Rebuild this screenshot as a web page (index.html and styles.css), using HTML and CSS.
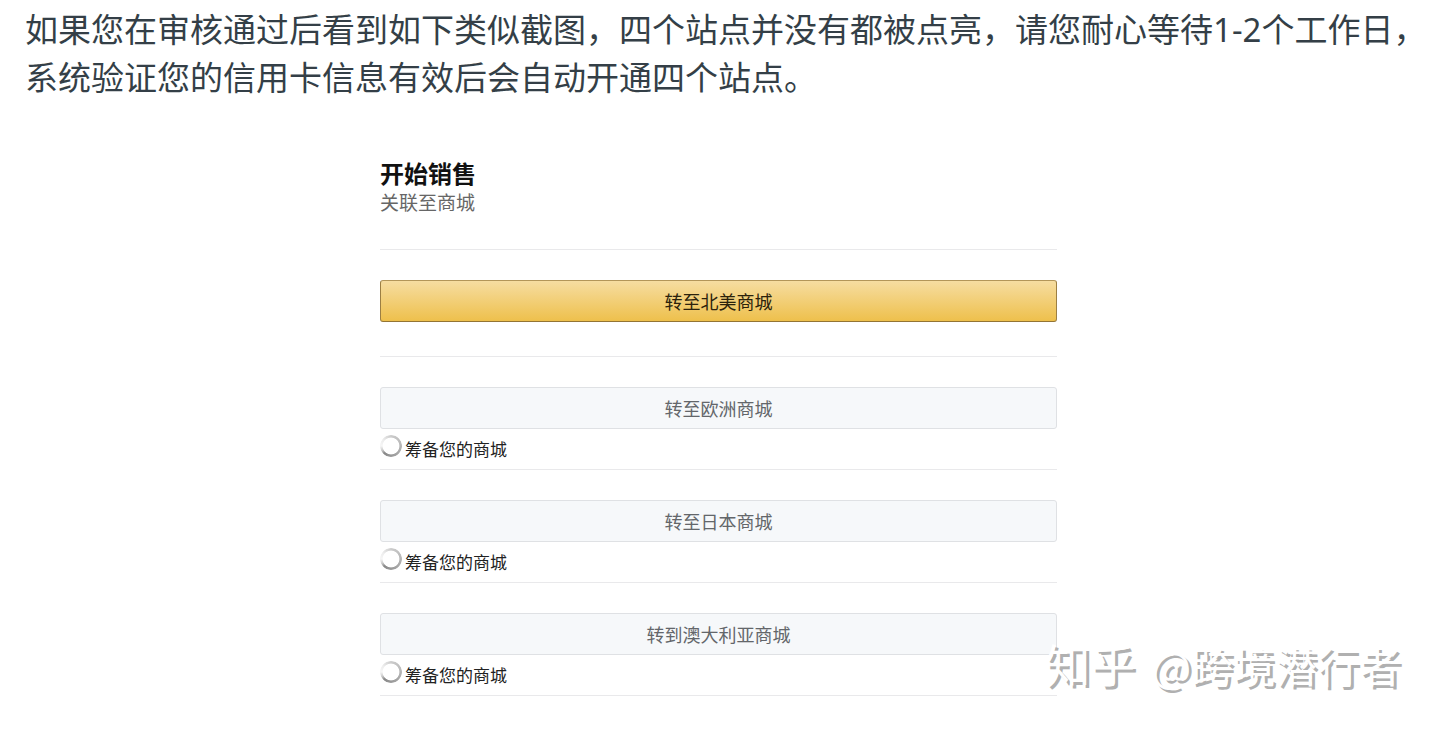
FILE: index.html
```html
<!DOCTYPE html>
<html lang="zh-CN">
<head>
	<meta charset="utf-8">
	<title>开始销售</title>
	<link rel="stylesheet" href="styles.css">
</head>

<body>

<div class="article">
	<p class="intro">如果您在审核通过后看到如下类似截图，四个站点并没有都被点亮，请您耐心等待1-2个工作日，<br>系统验证您的信用卡信息有效后会自动开通四个站点。</p>

	<div class="panel">
		<h1>开始销售</h1>
		<div class="subtitle">关联至商城</div>

		<div class="market active">
			<button type="button">转至北美商城</button>
		</div>

		<div class="market">
			<button type="button" disabled>转至欧洲商城</button>
			<div class="status"><span class="spinner"></span>筹备您的商城</div>
		</div>

		<div class="market">
			<button type="button" disabled>转至日本商城</button>
			<div class="status"><span class="spinner"></span>筹备您的商城</div>
		</div>

		<div class="market">
			<button type="button" disabled>转到澳大利亚商城</button>
			<div class="status"><span class="spinner"></span>筹备您的商城</div>
		</div>
	</div>
</div>

<div class="watermark"><span class="brand">知乎</span><span>@跨境潜行者</span></div>

</body>
</html>
```

FILE: styles.css
```css
* {
	box-sizing: border-box;
}
body {
	margin: 0;
	position: relative;
	min-height: 100vh;
	background-color: #fff;
	font-family: "Noto Sans", "Noto Sans CJK SC", sans-serif;
}
.article {
	padding: 6px 8px 30px 5px;
}
.intro {
	margin: 0;
	padding-left: 20px;
	font-size: 33px;
	line-height: 48px;
	color: #343f47;
}
.panel {
	max-width: 677px;
	margin: 57px auto 0;
	border-bottom: 1px solid #e9e9eb;
}
.panel h1 {
	margin: 0;
	font-size: 24px;
	line-height: 30px;
	color: #111;
}
.subtitle {
	margin-bottom: 32px;
	font-size: 19px;
	line-height: 28px;
	color: #666;
}
.market {
	border-top: 1px solid #e9e9eb;
	padding-top: 30px;
}
.market button {
	display: block;
	width: 100%;
	height: 42px;
	padding: 0;
	border: 1px solid #dfe1e4;
	border-radius: 3px;
	background-color: #f6f8fa;
	font-family: inherit;
	font-size: 18px;
	color: #63666a;
}
.active {
	padding-bottom: 34px;
}
.active button {
	border-color: #b39659 #9c7f43 #937434;
	background: linear-gradient(#f6dda1, #eec04c);
	color: #2b220c;
}
.status {
	display: flex;
	gap: 3px;
	height: 40px;
	padding-top: 6px;
	font-size: 17px;
	line-height: 30px;
	color: #222;
}
.spinner {
	width: 22px;
	height: 22px;
	border-radius: 50%;
	background: conic-gradient(#ccc, #bbb 20%, #aaa 35%, #999 50%, #888 62%, #ccc 68%, #f6f6f6 75%, #eee 85%, #ccc);
	-webkit-mask: radial-gradient(closest-side, transparent 72%, #000 80%);
	mask: radial-gradient(closest-side, transparent 72%, #000 80%);
}
.watermark {
	position: absolute;
	right: 39px;
	bottom: 35px;
	display: flex;
	align-items: baseline;
	gap: 16px;
	font-family: "Noto Sans CJK SC", sans-serif;
	font-size: 42px;
	line-height: 60px;
	color: #fff;
	text-shadow: 3px 3px 0 #b0b0b0;
}
.brand {
	font-size: 45px;
}
```
